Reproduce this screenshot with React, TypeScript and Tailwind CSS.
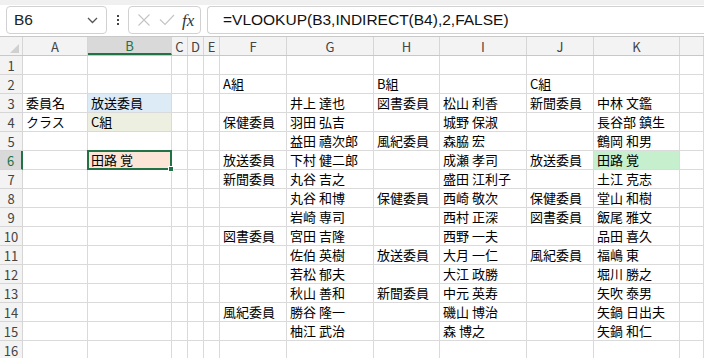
import React from "react";

const cols = ["A", "B", "C", "D", "E", "F", "G", "H", "I", "J", "K", ""];

// row -> column letter -> text
const data: Record<number, Record<string, string>> = {
  2: { F: "A組", H: "B組", J: "C組" },
  3: { A: "委員名", B: "放送委員", G: "井上 達也", H: "図書委員", I: "松山 利香", J: "新聞委員", K: "中林 文鑑" },
  4: { A: "クラス", B: "C組", F: "保健委員", G: "羽田 弘吉", I: "城野 保淑", K: "長谷部 鎮生" },
  5: { G: "益田 禧次郎", H: "風紀委員", I: "森脇 宏", K: "鶴岡 和男" },
  6: { B: "田路 覚", F: "放送委員", G: "下村 健二郎", I: "成瀬 孝司", J: "放送委員", K: "田路 覚" },
  7: { F: "新聞委員", G: "丸谷 吉之", I: "盛田 江利子", K: "土江 克志" },
  8: { G: "丸谷 和博", H: "保健委員", I: "西崎 敬次", J: "保健委員", K: "堂山 和樹" },
  9: { G: "岩崎 専司", I: "西村 正深", J: "図書委員", K: "飯尾 雅文" },
  10: { F: "図書委員", G: "宮田 吉隆", I: "西野 一夫", K: "品田 喜久" },
  11: { G: "佐伯 英樹", H: "放送委員", I: "大月 一仁", J: "風紀委員", K: "福嶋 東" },
  12: { G: "若松 郁夫", I: "大江 政勝", K: "堀川 勝之" },
  13: { G: "秋山 善和", H: "新聞委員", I: "中元 英寿", K: "矢吹 泰男" },
  14: { F: "風紀委員", G: "勝谷 隆一", I: "磯山 博治", K: "矢鍋 日出夫" },
  15: { G: "柚江 武治", I: "森 博之", K: "矢鍋 和仁" },
};

const fills: Record<string, string> = {
  B3: "bg-[#ddebf7]",
  B4: "bg-[#edefe1]",
  B6: "bg-[#fce4d6]",
  K6: "bg-[#c6efce] text-[#006100]",
};

const gridCols =
  "grid grid-cols-[23px_65px_84px_16px_16px_16px_67px_87px_66px_87px_67px_86px_1fr]";

function FormulaBar() {
  return (
    <div className="bg-white">
      <div className="h-[5px] bg-[#f0f0f0]" />
      <div className="flex h-[31px] items-start gap-0 pt-[1px] font-['Liberation_Sans',sans-serif] text-[#222]">
        <div className="ml-[6px] flex h-[28px] w-[101px] items-center justify-between rounded-[4px] border border-[#d1d1d1] pl-[7px] pr-[8px] text-[15.5px]">
          <span>B6</span>
          <svg width="11" height="7" viewBox="0 0 11 7" fill="none" stroke="#555" strokeWidth="1.3">
            <path d="M1 1l4.5 4.5L10 1" />
          </svg>
        </div>
        <div className="flex h-[28px] w-[21px] flex-col items-center justify-center gap-[2px]">
          <span className="h-[2px] w-[2px] bg-[#444]" />
          <span className="h-[2px] w-[2px] bg-[#444]" />
          <span className="h-[2px] w-[2px] bg-[#444]" />
        </div>
        <div className="flex h-[28px] w-[73px] items-center rounded-[4px] border border-[#d1d1d1] pl-[8px]">
          <svg width="14" height="14" viewBox="0 0 14 14" fill="none" stroke="#c4c4c4" strokeWidth="1.1">
            <path d="M1.5 1.5l11 11M12.5 1.5l-11 11" />
          </svg>
          <svg className="ml-[8px]" width="16" height="12" viewBox="0 0 16 12" fill="none" stroke="#c4c4c4" strokeWidth="1.1">
            <path d="M1 5.5l5 5L15 1" />
          </svg>
          <span className="ml-[7px] font-['Liberation_Serif',serif] text-[17px] italic leading-none text-[#333]">
            fx
          </span>
        </div>
        <div className="ml-[6px] flex h-[28px] flex-1 items-center rounded-l-[4px] border border-r-0 border-[#d1d1d1] pl-[15px] text-[15.5px] text-[#111]">
          =VLOOKUP(B3,INDIRECT(B4),2,FALSE)
        </div>
      </div>
    </div>
  );
}

function ColumnHeader() {
  return (
    <div className={`${gridCols} h-[20px] border-y border-[#c8c8c8] bg-[#f3f3f3] text-[13px] text-[#444]`}>
      <div className="relative border-r border-[#d6d6d6]">
        <svg className="absolute bottom-[2px] right-[3px]" width="9" height="9" viewBox="0 0 9 9">
          <path d="M9 0v9H0z" fill="#d0d0d0" />
        </svg>
      </div>
      {cols.map((c, i) => (
        <div
          key={i}
          className={
            c === "B"
              ? "flex items-center justify-center border-r border-b-2 border-r-[#d6d6d6] border-b-[#217346] bg-[#d9d9d9] pt-[1px] leading-none text-[#217346]"
              : "flex items-center justify-center border-r border-[#d6d6d6] leading-none"
          }
        >
          {c}
        </div>
      ))}
    </div>
  );
}

function Row({ n }: { n: number }) {
  const row = data[n] ?? {};
  const selected = n === 6;
  return (
    <div className={`${gridCols} h-[19px] text-[13px]`}>
      <div
        className={
          selected
            ? "flex items-center justify-center border-r-2 border-b border-r-[#217346] border-b-[#d6d6d6] bg-[#d9d9d9] leading-none text-[#217346]"
            : "flex items-center justify-center border-r border-b border-[#d6d6d6] bg-[#f3f3f3] leading-none text-[#444]"
        }
      >
        {n}
      </div>
      {cols.map((c, i) => {
        const key = `${c}${n}`;
        const text = row[c];
        return (
          <div
            key={i}
            className={`relative whitespace-nowrap border-r border-b border-[#dadada] pl-[3px] leading-[18px] text-black ${fills[key] ?? "bg-white"}`}
          >
            {text}
            {key === "B6" && (
              <>
                <div className="absolute -top-px -left-px -right-px -bottom-px z-10 border-2 border-[#217346]" />
                <div className="absolute -bottom-[3px] -right-[3px] z-20 h-[6px] w-[6px] border border-white bg-[#217346]" />
              </>
            )}
          </div>
        );
      })}
    </div>
  );
}

export default function App() {
  const rows = Array.from({ length: 16 }, (_, i) => i + 1);
  return (
    <div className="h-[358px] w-[704px] overflow-hidden bg-white font-['Noto_Sans_CJK_JP',sans-serif]">
      <FormulaBar />
      <ColumnHeader />
      {rows.map((n) => (
        <Row key={n} n={n} />
      ))}
    </div>
  );
}
